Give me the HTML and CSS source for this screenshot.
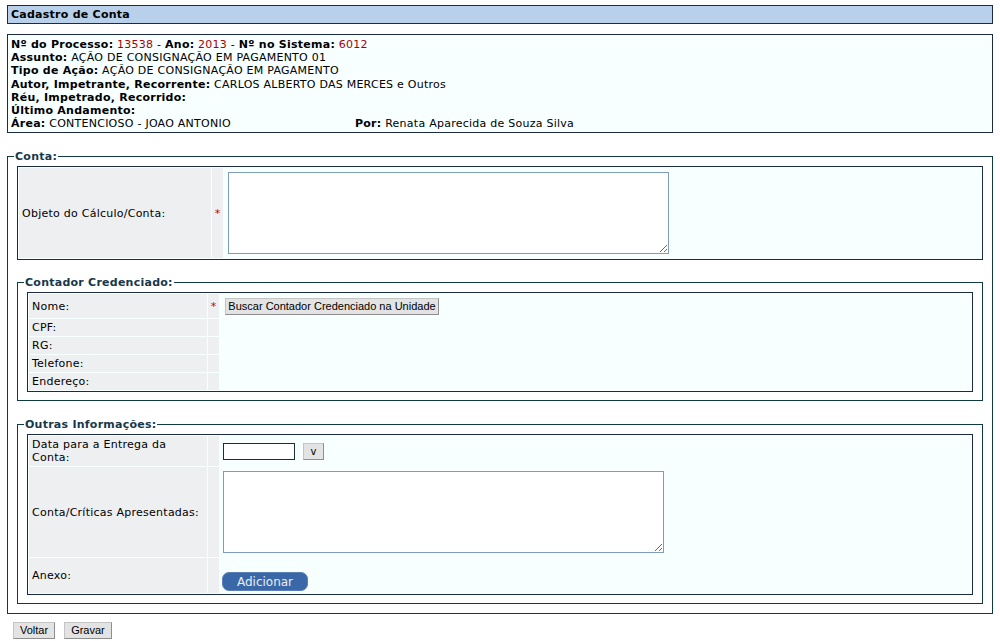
FILE: index.html
```html
<!DOCTYPE html>
<html lang="pt-BR">
  <head>
    <meta charset="UTF-8" />
    <title>Cadastro de Conta</title>
    <link rel="stylesheet" href="styles.css">
  </head>
  <body>
    <div class="titulo">Cadastro de Conta</div>

    <div class="processo">
      <div><b>Nº do Processo:</b> <span class="red">13538</span> - <b>Ano:</b> <span class="red">2013</span> - <b>Nº no Sistema:</b> <span class="red">6012</span></div>
      <div><b>Assunto:</b> AÇÃO DE CONSIGNAÇÃO EM PAGAMENTO 01</div>
      <div><b>Tipo de Ação:</b> AÇÃO DE CONSIGNAÇÃO EM PAGAMENTO</div>
      <div><b>Autor, Impetrante, Recorrente:</b> CARLOS ALBERTO DAS MERCES e Outros</div>
      <div><b>Réu, Impetrado, Recorrido:</b></div>
      <div><b>Último Andamento:</b></div>
      <div class="linha-area">
        <div class="area"><b>Área:</b> CONTENCIOSO - JOAO ANTONIO</div>
        <div><b>Por:</b> Renata Aparecida de Souza Silva</div>
      </div>
    </div>

    <fieldset class="grupo principal">
      <legend>Conta:</legend>
      <table class="form form-conta">
        <colgroup><col class="c-label"><col class="c-star"><col></colgroup>
        <tr>
          <td class="label">Objeto do Cálculo/Conta:</td>
          <td class="star">*</td>
          <td class="valor pad-area"><textarea class="area-txt"></textarea></td>
        </tr>
      </table>

      <fieldset class="grupo sub sub-contador">
        <legend>Contador Credenciado:</legend>
        <table class="form">
          <colgroup><col class="c-label2"><col class="c-star"><col></colgroup>
          <tr>
            <td class="label">Nome:</td>
            <td class="star">*</td>
            <td class="valor pad-btn"><button class="btn btn-buscar">Buscar Contador Credenciado na Unidade</button></td>
          </tr>
          <tr><td class="label">CPF:</td><td class="star"></td><td class="valor"></td></tr>
          <tr><td class="label">RG:</td><td class="star"></td><td class="valor"></td></tr>
          <tr><td class="label">Telefone:</td><td class="star"></td><td class="valor"></td></tr>
          <tr><td class="label">Endereço:</td><td class="star"></td><td class="valor"></td></tr>
        </table>
      </fieldset>

      <fieldset class="grupo sub sub-outras">
        <legend>Outras Informações:</legend>
        <table class="form">
          <colgroup><col class="c-label2"><col class="c-star"><col></colgroup>
          <tr class="row-data">
            <td class="label">Data para a Entrega da Conta:</td>
            <td class="star"></td>
            <td class="valor pad-data"><input type="text" class="data"><button class="btn btn-v">v</button></td>
          </tr>
          <tr>
            <td class="label">Conta/Críticas Apresentadas:</td>
            <td class="star"></td>
            <td class="valor pad-area2"><textarea class="area-txt"></textarea></td>
          </tr>
          <tr>
            <td class="label">Anexo:</td>
            <td class="star"></td>
            <td class="valor pad-anexo"><button class="adicionar">Adicionar</button></td>
          </tr>
        </table>
      </fieldset>
    </fieldset>

    <div class="acoes">
      <button class="btn btn-acao">Voltar</button>
      <button class="btn btn-acao">Gravar</button>
    </div>
  </body>
</html>
```

FILE: styles.css
```css
body {
  margin: 0;
  padding: 5px 7px 0;
  font-family: "DejaVu Sans", Verdana, sans-serif;
  font-size: 11px;
  line-height: 13px;
  letter-spacing: 0.25px;
  color: #000;
  background-color: #fff;
}

.titulo {
  background-color: #b9d0ea;
  border: 1px solid #1c2b44;
  padding: 2px 3px;
  font-weight: bold;
  margin-bottom: 10px;
}

.processo {
  background-color: #f7ffff;
  border: 1px solid #1c2b44;
  padding: 3px 3px 2px;
  line-height: 13.2px;
}

.red {
  color: #a80000;
}

.linha-area {
  display: flex;
}

.area {
  width: 344px;
}

.grupo {
  margin: 15px 0 0;
  padding: 3px 9px 9px;
  border: 1px solid #0f3b40;
  min-width: 0;
}

.principal {
  margin-top: 17px;
}

.grupo legend {
  font-weight: bold;
  color: #17384b;
  padding: 0 1px;
  margin-left: -3px;
  line-height: 13px;
}

.sub-contador {
  margin-top: 16px;
  padding-bottom: 8px;
}

.sub-outras {
  margin-top: 17px;
  padding-bottom: 8px;
}

.form {
  width: 100%;
  table-layout: fixed;
  border: 1px solid #1b2b45;
  border-spacing: 1px;
  background-color: #f7ffff;
}

.form td {
  padding: 2px 3px;
  vertical-align: middle;
}

.c-label {
  width: 192px;
}

.c-label2 {
  width: 178px;
}

.c-star {
  width: 11px;
}

.form td.label,
.form td.star {
  background-color: #eeeff1;
}

.form td.star {
  color: #cc0000;
  padding: 0;
  text-align: center;
}

.form td.pad-area {
  padding: 4px 5px 4px 4px;
}

.form td.pad-btn {
  padding: 4px 5px 3px;
}

.form td.pad-data {
  padding: 6px 3px 6px;
}

.form td.pad-area2 {
  padding: 4px 3px 4px;
}

.form td.pad-anexo {
  padding: 14px 2px 2px;
}

.area-txt {
  display: block;
  box-sizing: border-box;
  width: 441px;
  height: 82px;
  margin: 0;
  border: 1px solid #7f9db9;
  background-color: #fff;
  resize: both;
}

.btn {
  font-family: "Liberation Sans", Tahoma, sans-serif;
  font-size: 11px;
  line-height: 13px;
  letter-spacing: 0;
  color: #000;
  background-color: #e3e3e3;
  border: 1px solid;
  border-color: #c4c4c4 #8e8e8e #8e8e8e #c4c4c4;
  padding: 1px 6px;
  margin: 0;
  vertical-align: middle;
  white-space: nowrap;
}

.btn-buscar {
  width: 214px;
  height: 17px;
  padding: 0;
  font-size: 11px;
}

.data {
  box-sizing: border-box;
  width: 72px;
  height: 17px;
  margin: 0 8px 0 0;
  padding: 0 2px;
  border: 1px solid #1c2b44;
  background-color: #fff;
  vertical-align: middle;
}

.btn-v {
  width: 21px;
  height: 17px;
  padding: 0;
  font-family: "DejaVu Sans", Verdana, sans-serif;
  font-size: 10px;
}

.adicionar {
  width: 86px;
  height: 19px;
  padding: 0;
  margin: 0;
  font-family: "DejaVu Sans", Verdana, sans-serif;
  font-size: 12px;
  letter-spacing: 0;
  color: #e9eef7;
  background-color: #3a67a8;
  border: 1px solid #5b80b8;
  border-radius: 7px;
  display: block;
}

.acoes {
  display: flex;
  gap: 9px;
  padding: 8px 0 0 6px;
}

.btn-acao {
  height: 17px;
  padding: 0 6px;
  font-size: 11px;
}
```
